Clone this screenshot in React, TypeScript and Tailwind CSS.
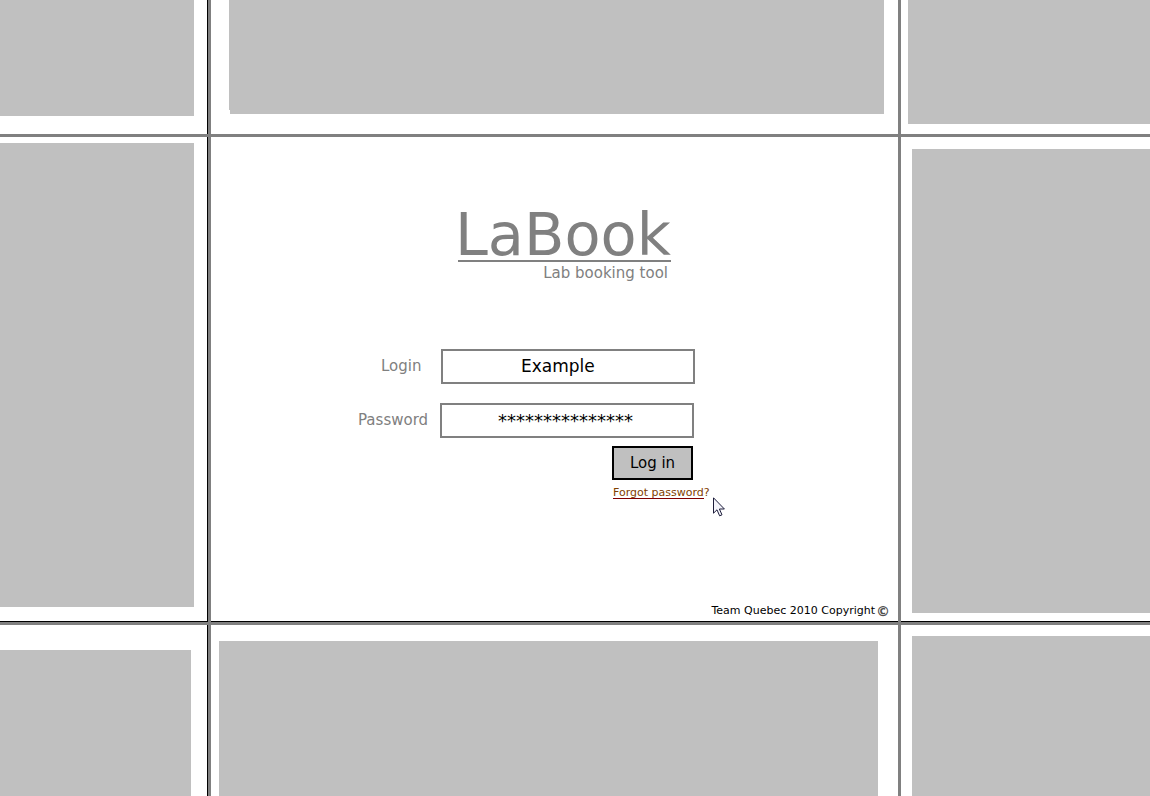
import React from 'react';

function Block({ className }: { className: string }) {
  return <div className={`bg-[#c0c0c0] ${className}`} />;
}

function Cursor() {
  return (
    <svg
      aria-hidden="true"
      className="pointer-events-none absolute left-full top-[9px] ml-[3px] h-5 w-3"
      viewBox="0 0 12 20"
      fill="#f4f4fa"
      stroke="#1c1c3a"
      strokeWidth="1"
    >
      <path d="M0.5 0.8V16.2L4 12.8L6.6 18.8L9 17.8L6.4 12H11.4Z" />
    </svg>
  );
}

function LoginPanel() {
  return (
    <main className="flex flex-col border-b border-black">
      <div className="mx-auto w-[393px] pt-[73px]">
        <header className="ml-[100px] w-[213px] text-[#808080]">
          <h1 className="-ml-[3px] whitespace-nowrap text-[59px] leading-[50px]">LaBook</h1>
          <p className="border-t-2 border-[#808080] pr-[3px] text-right text-[15px] leading-[23px]">
            Lab booking tool
          </p>
        </header>
        <form className="mt-16" onSubmit={(e) => e.preventDefault()}>
          <div className="flex items-center">
            <label htmlFor="login" className="w-[83px] pl-[23px] text-[15px] text-[#808080]">
              Login
            </label>
            <input
              id="login"
              type="text"
              defaultValue="Example"
              className="h-[35px] w-[254px] border-2 border-[#808080] bg-white pb-[2px] pl-[78px] text-[17px] text-black outline-none"
            />
          </div>
          <div className="mt-[19px] flex items-center">
            <label htmlFor="password" className="w-[82px] text-[15px] text-[#808080]">
              Password
            </label>
            <input
              id="password"
              type="text"
              defaultValue="***************"
              className="h-[35px] w-[254px] border-2 border-[#808080] bg-white pl-[56px] text-[18px] text-black outline-none"
            />
          </div>
          <div className="ml-[254px] mt-2 flex flex-col items-start">
            <button
              type="submit"
              className="h-[34px] w-[81px] border-2 border-black bg-[#c0c0c0] text-[15px] text-black"
            >
              Log in
            </button>
            <a
              href="#forgot"
              className="relative ml-px mt-2 whitespace-nowrap text-[11px] leading-[10px] text-[#804000]"
            >
              <span className="inline-block border-b border-[#800000]">Forgot password</span>?
              <Cursor />
            </a>
          </div>
        </form>
      </div>
      <footer className="mt-auto flex items-center justify-end gap-px pb-[2px] pr-2 text-[11px] text-black">
        <span>Team Quebec 2010 Copyright</span>
        <span className="text-[14px] font-bold leading-4 text-[#505050]">©</span>
      </footer>
    </main>
  );
}

export default function App() {
  return (
    <div className="grid min-h-screen grid-cols-[211px_1fr_252px] grid-rows-[137px_1fr_174px] overflow-hidden bg-white font-['DejaVu_Sans',sans-serif]">
      <div className="flex border-b-3 border-r-3 border-[#808080]">
        <div className="flex-1 border-r border-black pb-[18px] pr-[13px]">
          <Block className="h-full" />
        </div>
      </div>
      <div className="border-b-3 border-[#808080] pb-5 pl-[18px] pr-[14px]">
        <div className="relative h-full">
          <Block className="h-full" />
          <span className="absolute bottom-0 left-0 h-1 w-px bg-white" />
        </div>
      </div>
      <div className="border-b-3 border-l-3 border-[#808080] pb-[10px] pl-[7px]">
        <Block className="h-full" />
      </div>

      <div className="flex border-r-3 border-[#808080]">
        <div className="flex flex-1 border-b border-r border-black pb-[14px] pr-[13px] pt-[6px]">
          <Block className="flex-1" />
        </div>
      </div>
      <LoginPanel />
      <div className="flex border-l-3 border-[#808080]">
        <div className="flex flex-1 border-b border-black pb-2 pl-[11px] pt-3">
          <Block className="flex-1" />
        </div>
      </div>

      <div className="flex border-r-3 border-t-3 border-[#808080]">
        <div className="flex-1 border-r border-black pr-4 pt-[25px]">
          <Block className="h-full" />
        </div>
      </div>
      <div className="border-t-3 border-[#808080] pl-2 pr-5 pt-4">
        <Block className="h-full" />
      </div>
      <div className="border-l-3 border-t-3 border-[#808080] pl-[11px] pt-[11px]">
        <Block className="h-full" />
      </div>
    </div>
  );
}
